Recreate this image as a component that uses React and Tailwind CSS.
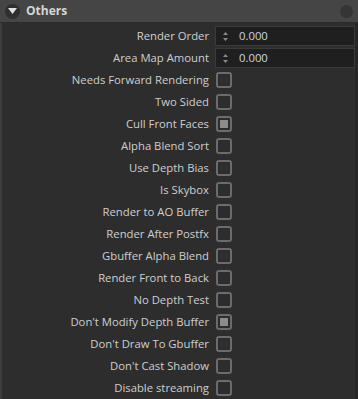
import React from 'react'

const rows = [
  { label: 'Render Order', type: 'number', value: '0.000' },
  { label: 'Area Map Amount', type: 'number', value: '0.000' },
  { label: 'Needs Forward Rendering', type: 'check' },
  { label: 'Two Sided', type: 'check' },
  { label: 'Cull Front Faces', type: 'check', checked: true },
  { label: 'Alpha Blend Sort', type: 'check' },
  { label: 'Use Depth Bias', type: 'check' },
  { label: 'Is Skybox', type: 'check' },
  { label: 'Render to AO Buffer', type: 'check' },
  { label: 'Render After Postfx', type: 'check' },
  { label: 'Gbuffer Alpha Blend', type: 'check' },
  { label: 'Render Front to Back', type: 'check' },
  { label: 'No Depth Test', type: 'check' },
  { label: "Don't Modify Depth Buffer", type: 'check', checked: true },
  { label: "Don't Draw To Gbuffer", type: 'check' },
  { label: "Don't Cast Shadow", type: 'check' },
  { label: 'Disable streaming', type: 'check' },
]

export default function App() {
  return (
    <div className="w-[358px] h-[399px] bg-[#2d2d2d] overflow-hidden font-['Open_Sans',sans-serif] text-[11.3px]">
      <Header />
      <div className="flex border-l-2 border-[#3c3c3c] h-full">
        <div className="flex-1 flex flex-col pt-[2px]">
          {rows.map((r) => (
            <Row key={r.label} row={r} />
          ))}
        </div>
        <div className="w-[3px] bg-[#262626]" />
      </div>
    </div>
  )
}

function Header() {
  return (
    <div className="h-[23px] flex items-center bg-[#454545] border-b border-[#2a2a2a] pl-[5px] pr-[5px]">
      <div className="w-[15px] h-[15px] rounded-full bg-[#2f2f2f] flex items-center justify-center">
        <svg width="9" height="6" viewBox="0 0 9 6">
          <polygon points="0,0 9,0 4.5,6" fill="#e0e0e0" />
        </svg>
      </div>
      <span className="ml-[6px] font-bold text-[#d6d6d6] text-[12px]">Others</span>
      <div className="ml-auto w-[13px] h-[13px] rounded-full bg-[#353535]" />
    </div>
  )
}

function Row({ row }) {
  return (
    <div className="h-[22px] flex items-center">
      <div className="w-[207px] text-right text-[#cfcfcf] whitespace-nowrap leading-none">
        {row.label}
      </div>
      {row.type === 'number' ? <NumberField value={row.value} /> : <Checkbox checked={row.checked} />}
    </div>
  )
}

function NumberField({ value }) {
  return (
    <div className="ml-[6px] w-[140px] h-[20px] bg-[#1f1f1f] border border-[#3a3a3a] flex items-center">
      <div className="w-[14px] flex flex-col items-center justify-center gap-[3px] ml-[2px]">
        <svg width="5" height="3" viewBox="0 0 5 3"><polygon points="2.5,0 5,3 0,3" fill="#8a8a8a" /></svg>
        <svg width="5" height="3" viewBox="0 0 5 3"><polygon points="0,0 5,0 2.5,3" fill="#8a8a8a" /></svg>
      </div>
      <span className="ml-[7px] text-[#c9d6e6] leading-none">{value}</span>
    </div>
  )
}

function Checkbox({ checked }) {
  return (
    <div className="ml-[7px] w-[16px] h-[16px] rounded-[3px] border-2 border-[#6b6b6b] flex items-center justify-center">
      {checked && <div className="w-[8px] h-[8px] bg-[#8c8c8c]" />}
    </div>
  )
}
